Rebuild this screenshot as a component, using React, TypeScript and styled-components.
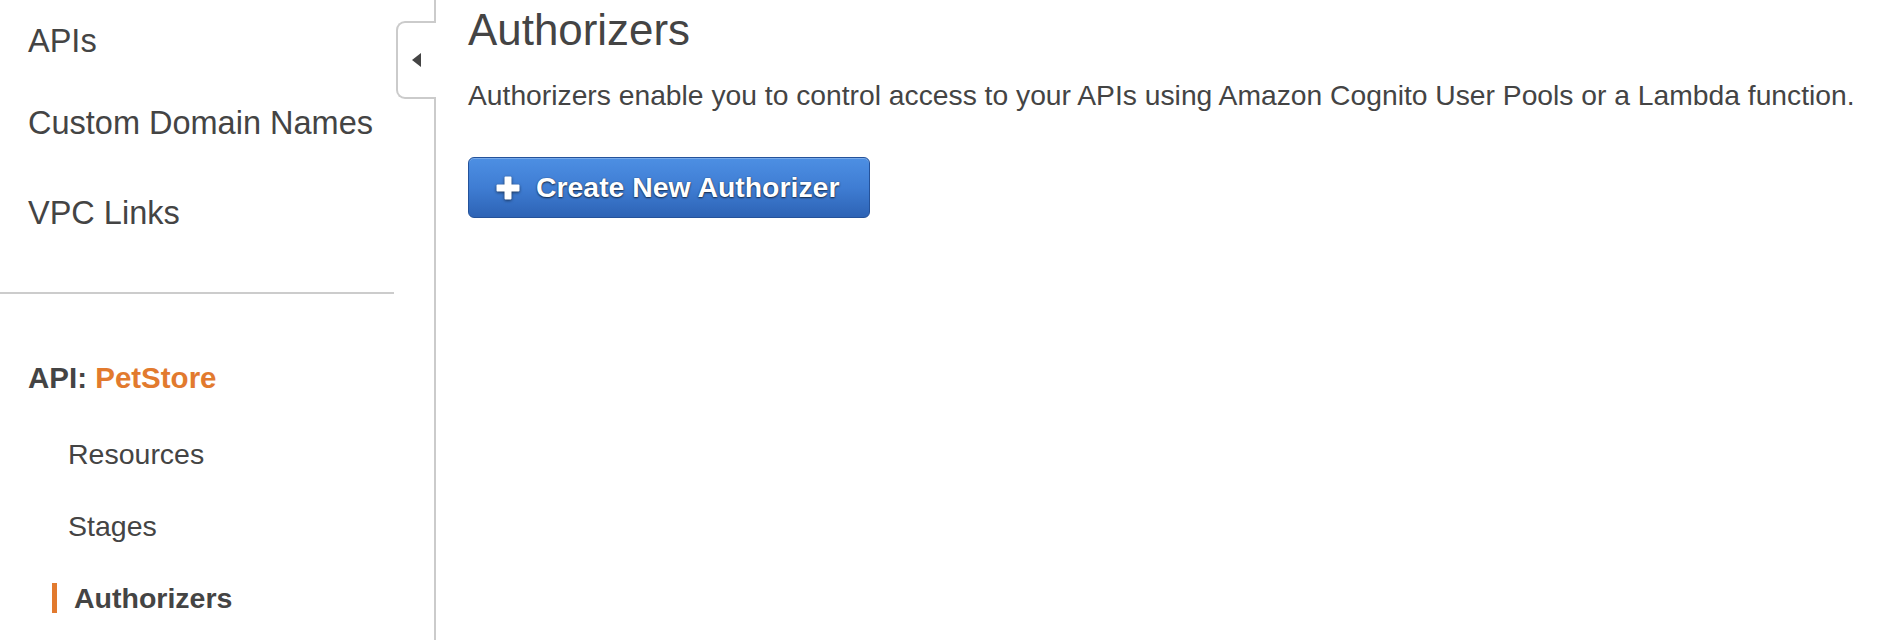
import React from "react";
import styled, { createGlobalStyle } from "styled-components";

const Global = createGlobalStyle`
  html, body { margin: 0; padding: 0; background: #fff; }
  body { font-family: "Liberation Sans", Arial, Helvetica, sans-serif; color: #444; }
  * { box-sizing: border-box; }
`;

const Page = styled.div`
  display: flex;
  height: 640px;
  width: 1888px;
  overflow: hidden;
`;

const Sidebar = styled.nav`
  position: relative;
  flex: 0 0 436px;
  border-right: 2px solid #cbcbcb;
  padding-top: 22.5px;
  display: flex;
  flex-direction: column;
`;

const NavItem = styled.div<{ $mt?: number }>`
  font-size: 32.5px;
  line-height: 36px;
  padding-left: 28px;
  margin-top: ${(p) => p.$mt ?? 0}px;
  color: #444;
`;

const Divider = styled.hr<{ $mt: number }>`
  margin: ${(p) => p.$mt}px 40px 0 0;
  border: none;
  height: 2px;
  background: #cccccc;
`;

const ApiHeader = styled.div`
  margin-top: 67.5px;
  padding-left: 28px;
  font-size: 29.5px;
  line-height: 34px;
  font-weight: 700;
  color: #444;
`;

const ApiName = styled.span`
  color: #e27a2e;
`;

const SubList = styled.div`
  margin-top: 43.8px;
  display: flex;
  flex-direction: column;
  gap: 42px;
`;

const SubItem = styled.div<{ $active?: boolean }>`
  margin-left: 52px;
  border-left: 5.5px solid ${(p) => (p.$active ? "#e27a2e" : "transparent")};
  padding-left: ${(p) => (p.$active ? 17 : 11)}px;
  font-size: 28.5px;
  line-height: 30px;
  font-weight: ${(p) => (p.$active ? 700 : 400)};
  color: #444;
`;

const CollapseTab = styled.div`
  position: absolute;
  top: 21px;
  right: -2px;
  width: 40px;
  height: 78px;
  background: #fff;
  border: 2px solid #cbcbcb;
  border-right: none;
  border-radius: 9px 0 0 9px;
  display: flex;
  align-items: center;
  padding-left: 14px;
`;

const Main = styled.main`
  flex: 1;
  padding: 5px 0 0 32px;
  display: flex;
  flex-direction: column;
  align-items: flex-start;
`;

const Title = styled.h1`
  margin: 0;
  font-size: 43.9px;
  line-height: 50px;
  font-weight: 400;
  color: #444;
`;

const Description = styled.p`
  margin: 24.4px 0 0;
  font-size: 28.25px;
  line-height: 32px;
  color: #444;
`;

const PrimaryButton = styled.button`
  margin-top: 45.4px;
  height: 61px;
  display: inline-flex;
  align-items: center;
  gap: 16px;
  padding: 1px 30px 0 27px;
  border: 1.5px solid #24529a;
  border-radius: 6px;
  background: linear-gradient(to bottom, #4d8fe3 0%, #3f7dd3 50%, #2d63b5 100%);
  box-shadow: inset 0 1px 0 rgba(255, 255, 255, 0.25);
  color: #fff;
  font-family: "Liberation Sans", Arial, Helvetica, sans-serif;
  font-size: 28.4px;
  font-weight: 700;
  text-shadow: 0 1px 2px rgba(0, 0, 0, 0.65), 0 0 1px rgba(0, 0, 0, 0.5);
  cursor: pointer;
`;

const PlusIcon = styled.svg`
  width: 24px;
  height: 24px;
  flex: 0 0 24px;
  filter: drop-shadow(0 1px 1.5px rgba(0, 0, 0, 0.6));
`;

export default function App() {
  return (
    <>
      <Global />
      <Page>
        <Sidebar>
          <NavItem>APIs</NavItem>
          <NavItem $mt={46.5}>Custom Domain Names</NavItem>
          <NavItem $mt={54.4}>VPC Links</NavItem>
          <Divider $mt={60.6} />
          <ApiHeader>
            API: <ApiName>PetStore</ApiName>
          </ApiHeader>
          <SubList>
            <SubItem>Resources</SubItem>
            <SubItem>Stages</SubItem>
            <SubItem $active>Authorizers</SubItem>
          </SubList>
          <CollapseTab>
            <svg width="9" height="14" viewBox="0 0 9 14">
              <path d="M9 0 L0 7 L9 14 Z" fill="#444" />
            </svg>
          </CollapseTab>
        </Sidebar>
        <Main>
          <Title>Authorizers</Title>
          <Description>
            Authorizers enable you to control access to your APIs using Amazon Cognito User Pools or a Lambda function.
          </Description>
          <PrimaryButton>
            <PlusIcon viewBox="0 0 24 24">
              <path
                d="M8.5 1.5 Q8.5 0.5 9.5 0.5 H14.5 Q15.5 0.5 15.5 1.5 V8.5 H22.5 Q23.5 8.5 23.5 9.5 V14.5 Q23.5 15.5 22.5 15.5 H15.5 V22.5 Q15.5 23.5 14.5 23.5 H9.5 Q8.5 23.5 8.5 22.5 V15.5 H1.5 Q0.5 15.5 0.5 14.5 V9.5 Q0.5 8.5 1.5 8.5 H8.5 Z"
                fill="#fff"
              />
            </PlusIcon>
            Create New Authorizer
          </PrimaryButton>
        </Main>
      </Page>
    </>
  );
}
